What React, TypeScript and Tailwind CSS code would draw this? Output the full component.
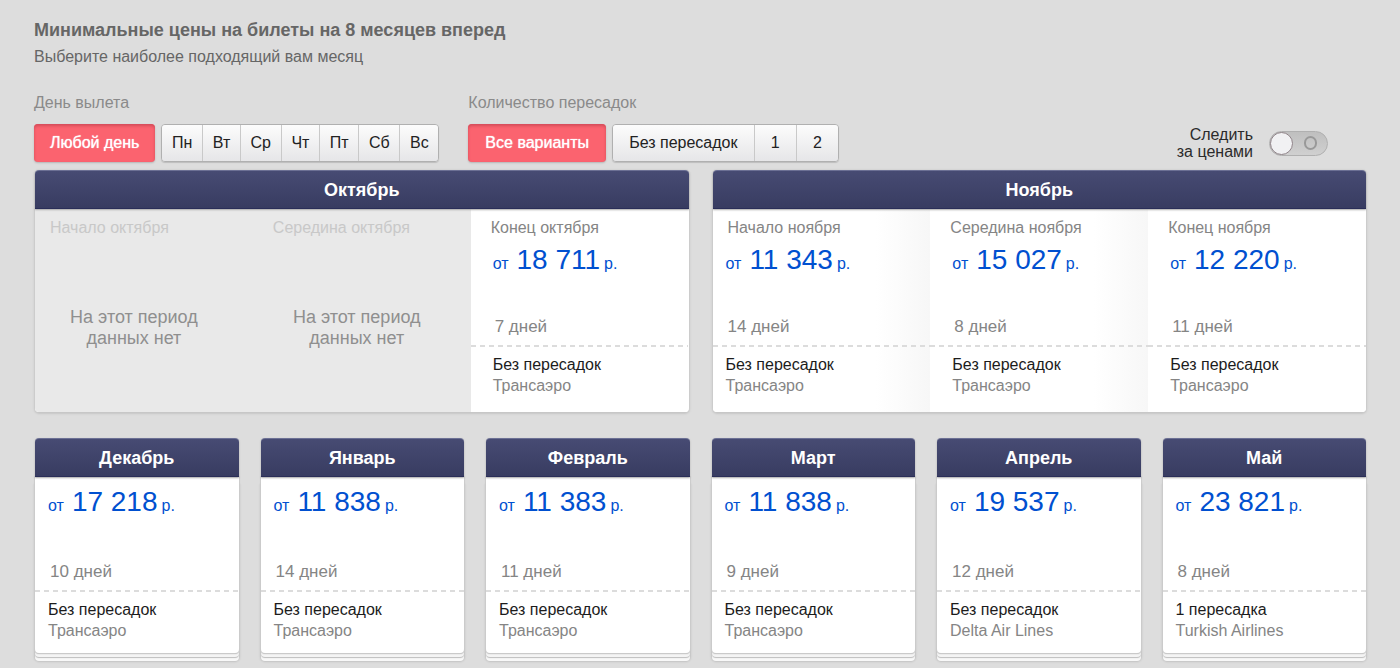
import React, { useState } from "react";

type Offer = {
  price: string;
  days: string;
  stops: string;
  airline: string;
};

type Period = { label: string; offer?: Offer };

const direct = (price: string, days: string, airline = "Трансаэро", stops = "Без пересадок"): Offer => ({
  price,
  days,
  stops,
  airline,
});

const nearMonths: { name: string; periods: Period[] }[] = [
  {
    name: "Октябрь",
    periods: [
      { label: "Начало октября" },
      { label: "Середина октября" },
      { label: "Конец октября", offer: direct("18 711", "7 дней") },
    ],
  },
  {
    name: "Ноябрь",
    periods: [
      { label: "Начало ноября", offer: direct("11 343", "14 дней") },
      { label: "Середина ноября", offer: direct("15 027", "8 дней") },
      { label: "Конец ноября", offer: direct("12 220", "11 дней") },
    ],
  },
];

const farMonths: { name: string; offer: Offer }[] = [
  { name: "Декабрь", offer: direct("17 218", "10 дней") },
  { name: "Январь", offer: direct("11 838", "14 дней") },
  { name: "Февраль", offer: direct("11 383", "11 дней") },
  { name: "Март", offer: direct("11 838", "9 дней") },
  { name: "Апрель", offer: direct("19 537", "12 дней", "Delta Air Lines") },
  { name: "Май", offer: direct("23 821", "8 дней", "Turkish Airlines", "1 пересадка") },
];

const weekdays = ["Пн", "Вт", "Ср", "Чт", "Пт", "Сб", "Вс"];
const stopOptions = ["Без пересадок", "1", "2"];

function FilterGroup({
  label,
  allLabel,
  allPadding,
  options,
  optionsWidth,
}: {
  label: string;
  allLabel: string;
  allPadding: string;
  options: string[];
  optionsWidth: string;
}) {
  const [selected, setSelected] = useState(allLabel);
  const active =
    "bg-[#fb636f] text-white [text-shadow:0_0_1px_#ffffff] shadow-[inset_0_2px_3px_#d34c5a,0_1px_2px_#b5b5b5]";
  const idle = "bg-linear-to-b from-[#fcfcfc] to-[#e6e6e8] text-[#222222]";
  return (
    <div role="group" aria-label={label}>
      <div className="text-base leading-5 text-[#8a8a8a]">{label}</div>
      <div className="mt-[11px] flex gap-1.5">
        <button
          type="button"
          aria-pressed={selected === allLabel}
          onClick={() => setSelected(allLabel)}
          className={`h-[38px] rounded text-base ${allPadding} ${selected === allLabel ? active : idle}`}
        >
          {allLabel}
        </button>
        <div
          className={`flex h-[38px] overflow-hidden rounded border border-[#b0b0b0] shadow-[0_1px_1px_#bdbdbd] ${optionsWidth}`}
        >
          {options.map((option) => (
            <button
              key={option}
              type="button"
              aria-pressed={selected === option}
              onClick={() => setSelected(option)}
              className={`grow border-l border-[#c9c9c9] text-base first:border-l-0 ${
                selected === option ? active : idle
              }`}
            >
              {option}
            </button>
          ))}
        </div>
      </div>
    </div>
  );
}

function MonthHeader({ name }: { name: string }) {
  return (
    <h2 className="relative flex h-[39px] items-center justify-center rounded-t border-t border-b border-t-[#6c7094] border-b-[#2a2e58] bg-linear-to-b from-[#474b73] to-[#383c61] text-lg font-bold text-white shadow-[0_1px_2px_#a8a8a8]">
      {name}
    </h2>
  );
}

function Price({ value }: { value: string }) {
  return (
    <a href="#offer" className="flex items-baseline text-[28px] leading-8 text-[#0050d0]">
      <span className="text-base leading-none">от</span>
      <span className="mr-1 ml-2 whitespace-nowrap">{value}</span>
      <span className="text-base leading-none">р.</span>
    </a>
  );
}

function OfferDetails({ offer, inset, gap }: { offer: Offer; inset: string; gap: string }) {
  return (
    <>
      <div className={inset}>
        <Price value={offer.price} />
        <div className={`pl-0.5 text-[17px] leading-5 text-[#858585] ${gap}`}>{offer.days}</div>
      </div>
      <div className="mt-2 h-0.5 bg-[repeating-linear-gradient(90deg,#dcdcdc_0_5px,transparent_5px_9px)]" />
      <div className={`pt-[7px] text-base leading-[21px] ${inset}`}>
        <div className="text-[#1c1c1c]">{offer.stops}</div>
        <div className="text-[#858585]">{offer.airline}</div>
      </div>
    </>
  );
}

function PeriodColumn({ period, index, last }: { period: Period; index: number; last: boolean }) {
  const first = index === 0;
  const { label, offer } = period;
  if (!offer) {
    return (
      <section className="flex flex-1 flex-col bg-[#e9e9e9] pt-2.5">
        <h3 className={`text-base leading-[18px] text-[#c8c8c8] ${first ? "pl-[15px]" : "pl-5"}`}>{label}</h3>
        <p
          className={`mt-[70px] text-center text-lg leading-[21px] text-[#8f8f8f] ${first ? "pr-5" : "pr-2.5"}`}
        >
          На этот период
          <br />
          данных нет
        </p>
      </section>
    );
  }
  return (
    <section
      className={`flex-1 pt-2.5 pb-4 ${last ? "bg-white" : "bg-linear-to-r from-white from-75% to-[#f7f7f7]"}`}
    >
      <h3 className={`mb-[7px] text-base leading-[18px] text-[#858585] ${first ? "pl-[15px]" : "pl-5"}`}>
        {label}
      </h3>
      <OfferDetails offer={offer} inset={first ? "pl-[13px]" : "pl-[22px]"} gap="mt-[41px]" />
    </section>
  );
}

function WatchToggle() {
  const [on, setOn] = useState(false);
  return (
    <label className="flex cursor-pointer items-center gap-4 pr-[38px] pb-0.5 text-right text-base leading-[17px] text-[#2b2b2b]">
      <span>
        Следить
        <br />
        за ценами
      </span>
      <input
        type="checkbox"
        checked={on}
        onChange={(event) => setOn(event.target.checked)}
        className="peer sr-only"
      />
      <span className="flex h-[25px] w-[59px] items-center rounded-full border border-[#b0b0b0] bg-linear-to-b from-[#bfbfbf] to-[#d0d0d0] peer-checked:flex-row-reverse">
        <span className="size-[23px] rounded-full border border-[#8f8388] bg-[#f1f1f3]" />
        <span className="flex flex-1 justify-center">
          <span className="h-3.5 w-[13px] rounded-full border-2 border-[#999999]" />
        </span>
      </span>
    </label>
  );
}

export default function App() {
  return (
    <main className="min-h-screen bg-[#dddddd] pt-[18px] pr-[34px] pb-1 pl-[34px] font-['Liberation_Sans',Arial,sans-serif]">
      <h1 className="text-lg leading-6 font-bold text-[#666666]">
        Минимальные цены на билеты на 8 месяцев вперед
      </h1>
      <p className="mt-[5px] text-base leading-5 text-[#666666]">Выберите наиболее подходящий вам месяц</p>

      <div className="mt-[26px] flex items-end justify-between">
        <div className="flex gap-[29px]">
          <FilterGroup
            label="День вылета"
            allLabel="Любой день"
            allPadding="px-4"
            options={weekdays}
            optionsWidth="w-[278px]"
          />
          <FilterGroup
            label="Количество пересадок"
            allLabel="Все варианты"
            allPadding="px-[17px]"
            options={stopOptions}
            optionsWidth="w-[227px]"
          />
        </div>
        <WatchToggle />
      </div>

      <div className="mt-2 ml-px grid grid-cols-2 gap-6">
        {nearMonths.map((month) => (
          <article key={month.name} className="rounded shadow-[0_1px_2px_1px_#c6c6c6]">
            <MonthHeader name={month.name} />
            <div className="flex overflow-hidden rounded-b bg-white">
              {month.periods.map((period, index) => (
                <PeriodColumn
                  key={period.label}
                  period={period}
                  index={index}
                  last={index === month.periods.length - 1}
                />
              ))}
            </div>
          </article>
        ))}
      </div>

      <div className="mt-[26px] ml-px grid grid-cols-6 gap-[22px]">
        {farMonths.map((month) => (
          <article key={month.name}>
            <MonthHeader name={month.name} />
            <div className="rounded-b bg-white pt-[9px] pb-3 shadow-[0_0_1px_1px_#cbcbcb,0_1px_1px_#bdbdbd,0_4px_0_#f4f4f4,0_5px_1px_#bdbdbd,0_8px_0_#f8f8f8,0_8px_2px_1px_#c2c2c2]">
              <OfferDetails offer={month.offer} inset="pl-[13px]" gap="mt-11" />
            </div>
          </article>
        ))}
      </div>
    </main>
  );
}
